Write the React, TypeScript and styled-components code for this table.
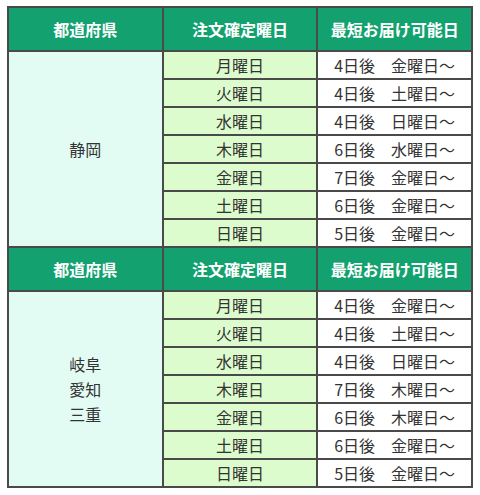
import React from 'react';
import styled, { createGlobalStyle } from 'styled-components';

const GlobalStyle = createGlobalStyle`
  body {
    margin: 0;
    background: #fff;
    font-family: "Noto Sans CJK JP", "Noto Sans", sans-serif;
  }
`;

const Wrapper = styled.div`
  padding: 6px 0 0 7px;
`;

const Table = styled.table`
  width: 466px;
  border-collapse: collapse;
  table-layout: fixed;
  color: #333;
  font-size: 16px;
`;

const HeadCell = styled.th`
  height: 42px;
  padding: 0;
  background: #13a26f;
  color: #fff;
  font-weight: bold;
  text-align: center;
  border: 2px solid #4a4a4a;
  line-height: 1;
`;

const PrefCell = styled.td`
  padding: 0;
  background: #e3fcf3;
  border: 2px solid #4a4a4a;
  text-align: center;
  vertical-align: middle;
  line-height: 25px;
`;

const DayCell = styled.td<{ $tone: 'day' | 'result' }>`
  height: 26px;
  padding: 0;
  background: ${(p) => (p.$tone === 'day' ? '#dcfccd' : '#fff')};
  border: 2px solid #4a4a4a;
  text-align: center;
  line-height: 1;
`;

interface ISection {
  prefs: string[];
  rows: [string, string][];
}

const sections: ISection[] = [
  {
    prefs: ['静岡'],
    rows: [
      ['月曜日', '4日後　金曜日～'],
      ['火曜日', '4日後　土曜日～'],
      ['水曜日', '4日後　日曜日～'],
      ['木曜日', '6日後　水曜日～'],
      ['金曜日', '7日後　金曜日～'],
      ['土曜日', '6日後　金曜日～'],
      ['日曜日', '5日後　金曜日～'],
    ],
  },
  {
    prefs: ['岐阜', '愛知', '三重'],
    rows: [
      ['月曜日', '4日後　金曜日～'],
      ['火曜日', '4日後　土曜日～'],
      ['水曜日', '4日後　日曜日～'],
      ['木曜日', '7日後　木曜日～'],
      ['金曜日', '6日後　木曜日～'],
      ['土曜日', '6日後　金曜日～'],
      ['日曜日', '5日後　金曜日～'],
    ],
  },
];

const App: React.FunctionComponent = () => (
  <Wrapper>
    <GlobalStyle />
    <Table>
      <tbody>
        {sections.map((section, si) => (
          <React.Fragment key={si}>
            <tr>
              <HeadCell>都道府県</HeadCell>
              <HeadCell>注文確定曜日</HeadCell>
              <HeadCell>最短お届け可能日</HeadCell>
            </tr>
            {section.rows.map(([day, result], ri) => (
              <tr key={ri}>
                {ri === 0 && (
                  <PrefCell rowSpan={section.rows.length}>
                    {section.prefs.map((p, pi) => (
                      <React.Fragment key={p}>
                        {pi > 0 && <br />}
                        {p}
                      </React.Fragment>
                    ))}
                  </PrefCell>
                )}
                <DayCell $tone="day">{day}</DayCell>
                <DayCell $tone="result">{result}</DayCell>
              </tr>
            ))}
          </React.Fragment>
        ))}
      </tbody>
    </Table>
  </Wrapper>
);

export default App;
